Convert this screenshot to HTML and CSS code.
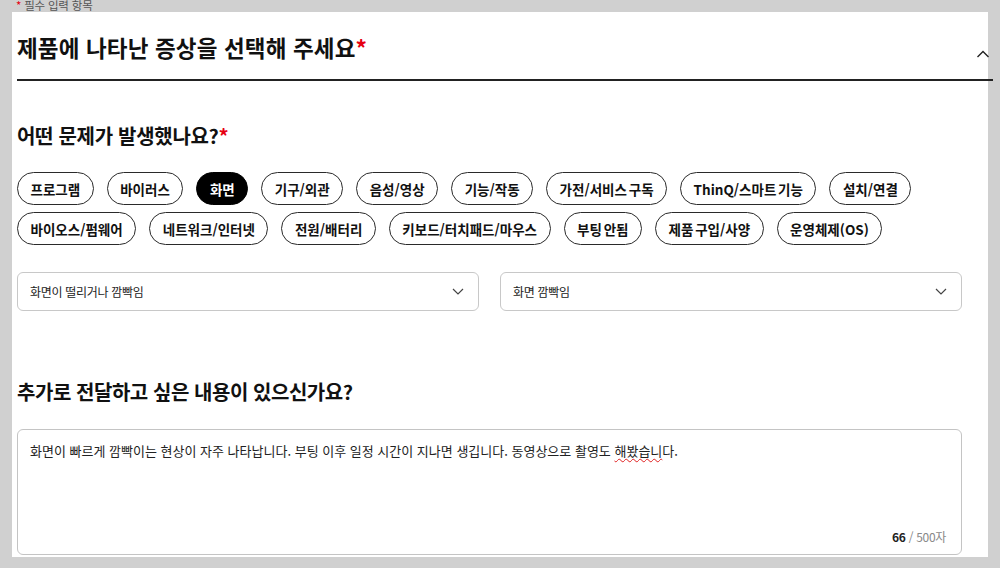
FILE: index.html
```html
<!DOCTYPE html>
<html lang="ko">
<head>
<meta charset="utf-8">
<title>증상 선택</title>
<link rel="stylesheet" href="styles.css">
</head>
<body>
<div class="note"><span class="req">*</span> 필수 입력 항목</div>
<main class="panel">
  <header class="sec-head">
    <h1 class="title">제품에 나타난 증상을 선택해 주세요<span class="req">*</span></h1>
    <svg class="collapse" width="14" height="8" viewBox="0 0 14 8" aria-hidden="true"><polyline points="1.5,7 7,1.5 12.5,7" fill="none" stroke="#222" stroke-width="1.4"/></svg>
  </header>

  <h2 class="q q-first">어떤 문제가 발생했나요?<span class="req">*</span></h2>
  <div class="chips">
    <button class="chip">프로그램</button>
    <button class="chip">바이러스</button>
    <button class="chip on">화면</button>
    <button class="chip">기구/외관</button>
    <button class="chip">음성/영상</button>
    <button class="chip">기능/작동</button>
    <button class="chip">가전/서비스 구독</button>
    <button class="chip">ThinQ/스마트 기능</button>
    <button class="chip">설치/연결</button>
    <button class="chip">바이오스/펌웨어</button>
    <button class="chip">네트워크/인터넷</button>
    <button class="chip">전원/배터리</button>
    <button class="chip">키보드/터치패드/마우스</button>
    <button class="chip">부팅 안됨</button>
    <button class="chip">제품 구입/사양</button>
    <button class="chip">운영체제(OS)</button>
  </div>

  <div class="selects">
    <div class="select"><span>화면이 떨리거나 깜빡임</span><svg width="12" height="7" viewBox="0 0 12 7" aria-hidden="true"><polyline points="1,1 6,6 11,1" fill="none" stroke="#444" stroke-width="1.2"/></svg></div>
    <div class="select"><span>화면 깜빡임</span><svg width="12" height="7" viewBox="0 0 12 7" aria-hidden="true"><polyline points="1,1 6,6 11,1" fill="none" stroke="#444" stroke-width="1.2"/></svg></div>
  </div>

  <h2 class="q q-second">추가로 전달하고 싶은 내용이 있으신가요?</h2>
  <div class="textbox">
    <p class="content">화면이 빠르게 깜빡이는 현상이 자주 나타납니다. 부팅 이후 일정 시간이 지나면 생깁니다. 동영상으로 촬영도 <span class="spell">해봤습니</span>다.</p>
    <div class="count"><b>66</b> / 500자</div>
  </div>
</main>
</body>
</html>
```

FILE: styles.css
```css
* { box-sizing: border-box; }
html, body { margin: 0; padding: 0; }
body {
  background: #d0d0d0;
  font-family: "Noto Sans CJK KR", "Noto Sans", sans-serif;
  color: #111;
  width: 1000px;
  height: 568px;
  overflow: hidden;
}
.req { color: #e60012; }
.note {
  height: 12px;
  line-height: 11px;
  font-size: 11.5px;
  padding-left: 16px;
  color: #555;
  letter-spacing: -0.2px;
  overflow: hidden;
}
.panel {
  background: #fff;
  margin: 0 12px;
  padding: 0 26px 1px 5px;
  height: 545px;
}
.sec-head {
  display: flex;
  align-items: center;
  justify-content: space-between;
  height: 69px;
  padding-top: 3px;
  border-bottom: 2px solid #222;
  margin-right: -31px;
}
.title {
  margin: 0;
  font-size: 22.5px;
  font-weight: 700;
  letter-spacing: 0.15px;
  line-height: 30px;
}
.collapse { margin: 13px 3px 0 0; }
.q {
  margin: 0;
  font-size: 20px;
  font-weight: 700;
  letter-spacing: -0.3px;
  line-height: 28px;
}
.q-first { margin-top: 41px; }
.chips {
  display: flex;
  flex-wrap: wrap;
  gap: 7px 13px;
  margin-top: 22px;
}
.chip {
  height: 33px;
  padding: 0 12.5px;
  border: 1px solid #2a2a2a;
  border-radius: 17px;
  background: #fff;
  color: #111;
  font-family: inherit;
  font-size: 13.5px;
  font-weight: 700;
  letter-spacing: 0;
  word-spacing: -2px;
}
.chip.on { background: #000; color: #fff; border-color: #000; }
.selects {
  display: flex;
  gap: 21px;
  margin-top: 27px;
}
.select {
  flex: 1;
  height: 39px;
  border: 1px solid #c8c8c8;
  border-radius: 6px;
  display: flex;
  align-items: center;
  justify-content: space-between;
  padding: 0 14px 0 12px;
  font-size: 12px;
  letter-spacing: -0.3px;
  color: #222;
}
.q-second { margin-top: 67px; letter-spacing: -0.45px; }
.textbox {
  margin-top: 23px;
  height: 126px;
  border: 1px solid #c4c4c4;
  border-radius: 6px;
  padding: 11px 15px 0 12px;
  display: flex;
  flex-direction: column;
}
.content {
  margin: 0;
  font-size: 13px;
  line-height: 20px;
  letter-spacing: 0;
  color: #222;
}
.spell {
  text-decoration: underline wavy #e02020;
  text-decoration-thickness: 1px;
  text-underline-offset: 2px;
  text-decoration-skip-ink: none;
}
.count {
  margin-top: auto;
  margin-bottom: 8px;
  text-align: right;
  font-size: 12px;
  line-height: 18px;
  color: #888;
  letter-spacing: -0.3px;
}
.count b { color: #222; font-weight: 700; }
```
